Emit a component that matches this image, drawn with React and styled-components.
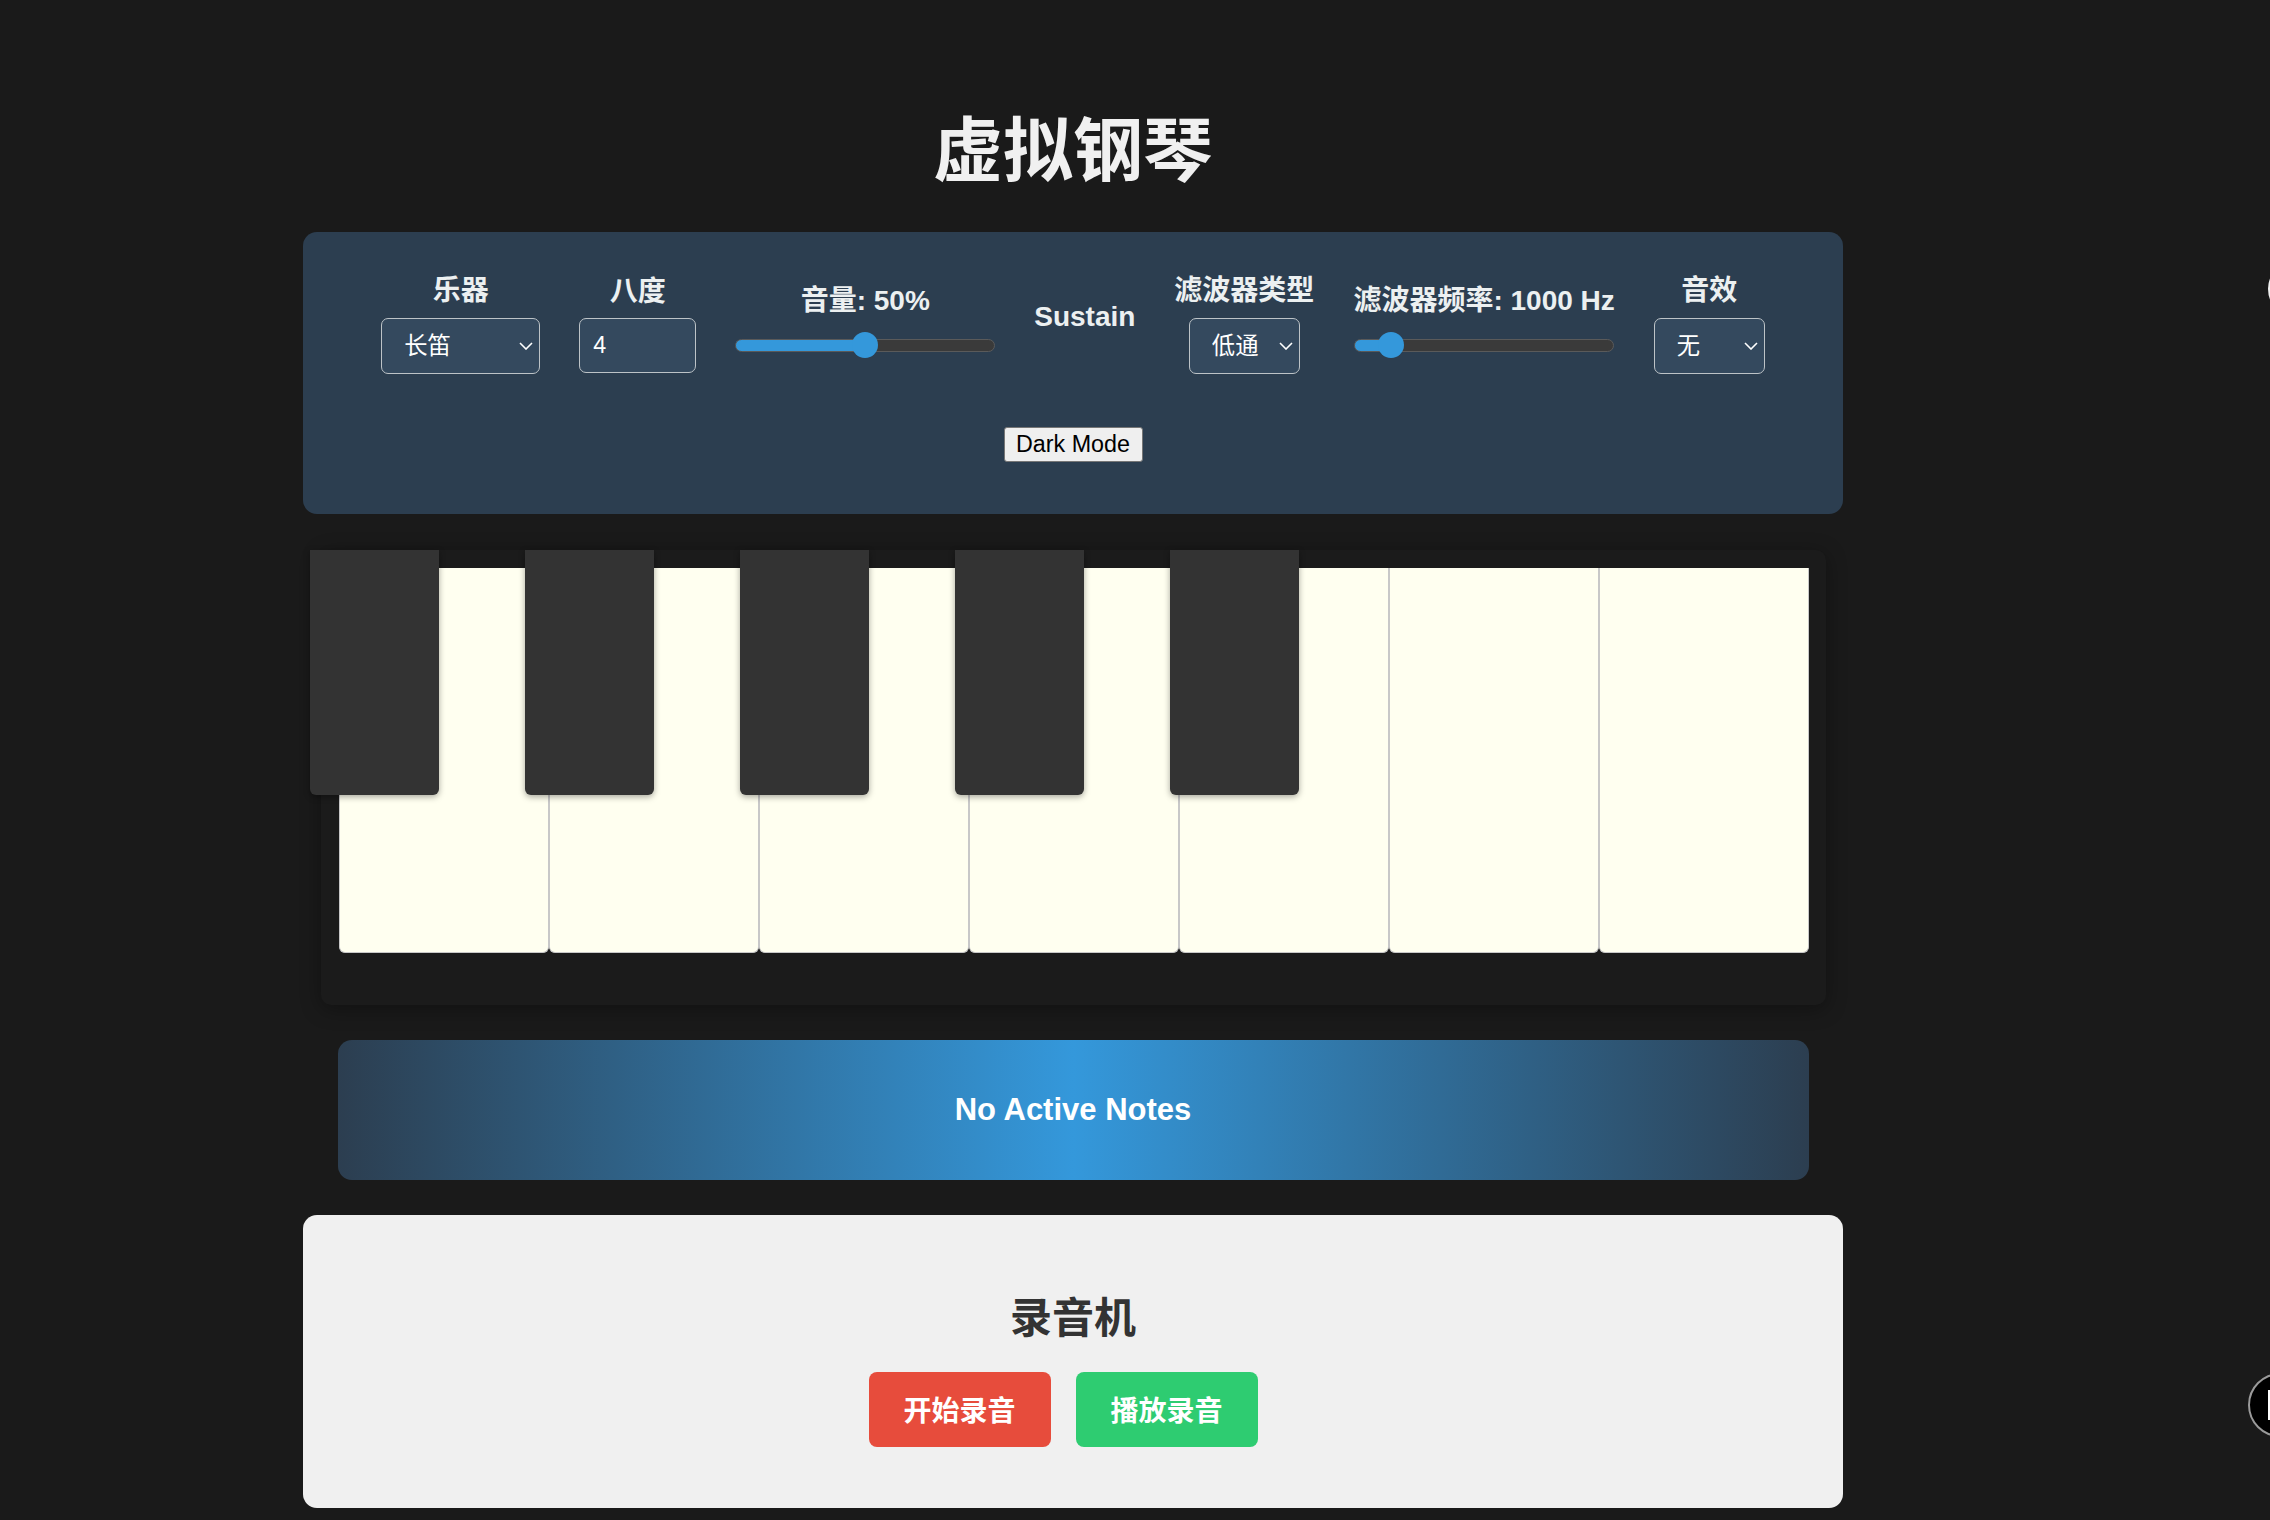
import React, { useState } from "react";
import styled, { createGlobalStyle } from "styled-components";

const GlobalStyle = createGlobalStyle`
  html, body {
    margin: 0;
    padding: 0;
    background: #1a1a1a;
    overflow: hidden;
  }
  body {
    font-family: "Liberation Sans", "Noto Sans CJK SC", sans-serif;
    color: #f0f0f0;
  }
`;

const Page = styled.div`
  padding: 110px 0 0 303px;
`;

const Column = styled.div`
  width: 1540px;
  display: flex;
  flex-direction: column;
  align-items: center;
`;

const Title = styled.h1`
  margin: 0 0 38px;
  font-size: 70px;
  line-height: 84px;
  font-weight: 700;
  color: #f0f0f0;
`;

const ControlPanel = styled.div`
  align-self: stretch;
  background: #2c3e50;
  border-radius: 14px;
  padding: 42px 0 52px;
  display: flex;
  flex-direction: column;
  align-items: center;
`;

const ControlRow = styled.div`
  display: flex;
  align-items: center;
  justify-content: center;
  gap: 39px;
`;

const ControlGroup = styled.div`
  display: flex;
  flex-direction: column;
  align-items: center;
  gap: ${({ $gap }) => ($gap === undefined ? 10 : $gap)}px;
  padding-bottom: ${({ $padBottom }) => $padBottom || 0}px;
`;

const Label = styled.label`
  font-size: 28px;
  line-height: 33.6px;
  font-weight: 700;
  color: #ecf0f1;
  white-space: nowrap;
`;

const SelectWrap = styled.div`
  position: relative;
  width: ${({ $width }) => $width}px;
  height: 56px;
`;

const Select = styled.select`
  appearance: none;
  -webkit-appearance: none;
  box-sizing: border-box;
  width: 100%;
  height: 100%;
  margin: 0;
  padding: 0 0 0 22px;
  background: #34495e;
  border: 1px solid #bdc3c7;
  border-radius: 7px;
  color: #ffffff;
  font-family: inherit;
  font-size: 23.3px;
  outline: none;
`;

const Chevron = styled.svg`
  position: absolute;
  right: 7px;
  top: 50%;
  transform: translateY(-50%);
  pointer-events: none;
`;

const NumberInput = styled.input`
  box-sizing: border-box;
  width: 117px;
  height: 55px;
  margin: 0;
  padding: 0 13px;
  background: #34495e;
  border: 1px solid #bdc3c7;
  border-radius: 7px;
  color: #ffffff;
  font-family: inherit;
  font-size: 23.3px;
  outline: none;
`;

const Slider = styled.input`
  -webkit-appearance: none;
  appearance: none;
  box-sizing: border-box;
  width: 260px;
  height: 13px;
  margin: 7px 0 12px;
  border: 1px solid #5a5a5a;
  border-radius: 7px;
  background: linear-gradient(
    to right,
    #3498db 0%,
    #3498db ${({ $fill }) => $fill}%,
    #3a3a3a ${({ $fill }) => $fill}%,
    #3a3a3a 100%
  );
  outline: none;

  &::-webkit-slider-thumb {
    -webkit-appearance: none;
    appearance: none;
    width: 26px;
    height: 26px;
    border-radius: 50%;
    background: #3498db;
    border: none;
    cursor: pointer;
  }
`;

const ModeButton = styled.button`
  margin-top: 53px;
  width: 139px;
  height: 35px;
  padding: 0;
  background: #efefef;
  border: 1px solid #767676;
  border-radius: 3px;
  color: #000;
  font-family: "Liberation Sans", sans-serif;
  font-size: 23.3px;
  cursor: pointer;
`;

const PianoBox = styled.div`
  position: relative;
  margin-top: 36px;
  padding: 18px 17px 52px 18px;
  background: #1b1b1b;
  border-radius: 10px;
  box-shadow: 0 4px 20px rgba(0, 0, 0, 0.35);
  display: flex;
`;

const WhiteKey = styled.div`
  box-sizing: border-box;
  width: 210px;
  height: 385px;
  background: #fffff0;
  border: 1px solid #c8c8c8;
  border-top: none;
  border-radius: 0 0 6px 6px;
  cursor: pointer;
`;

const BlackKey = styled.div`
  position: absolute;
  top: 0;
  left: ${({ $index }) => $index * 215 - 11}px;
  width: 129px;
  height: 245px;
  background: #333333;
  border-radius: 0 0 6px 6px;
  box-shadow: 0 2px 6px rgba(0, 0, 0, 0.35);
  cursor: pointer;
  z-index: 2;
`;

const NotesBar = styled.div`
  margin-top: 35px;
  width: 1471px;
  height: 140px;
  border-radius: 14px;
  background: linear-gradient(90deg, #2c3e50 0%, #3498db 50%, #2c3e50 100%);
  display: flex;
  align-items: center;
  justify-content: center;
  color: #ffffff;
  font-size: 31px;
  font-weight: 700;
`;

const Recorder = styled.div`
  align-self: stretch;
  margin-top: 35px;
  padding: 79px 0 61px;
  background: #f0f0f0;
  border-radius: 14px;
  display: flex;
  flex-direction: column;
  align-items: center;
`;

const RecorderTitle = styled.h2`
  margin: 0 0 28px;
  font-size: 42px;
  line-height: 50px;
  font-weight: 700;
  color: #333333;
`;

const RecorderButtons = styled.div`
  display: flex;
  gap: 25px;
  padding-right: 20px;
`;

const RecButton = styled.button`
  width: 182px;
  height: 75px;
  padding: 0;
  border: none;
  border-radius: 8px;
  background: ${({ $color }) => $color};
  color: #ffffff;
  font-family: inherit;
  font-size: 28px;
  font-weight: 700;
  cursor: pointer;
`;

const EdgeDot = styled.div`
  position: fixed;
  left: 2268px;
  top: 259px;
  width: 60px;
  height: 60px;
  border-radius: 50%;
  background: #f0f0f0;
`;

const EdgeFab = styled.div`
  position: fixed;
  left: 2248px;
  top: 1373px;
  box-sizing: border-box;
  width: 64px;
  height: 64px;
  border-radius: 50%;
  background: #000;
  border: 2px solid #9a9a9a;
  display: flex;
  align-items: center;
  padding-left: 18px;
`;

const FabMark = styled.span`
  display: block;
  width: 16px;
  height: 30px;
  background: #ffffff;
`;

const ChevronIcon = () => (
  <Chevron width="14" height="8" viewBox="0 0 14 8">
    <polyline points="1,1 7,7 13,1" fill="none" stroke="#ffffff" strokeWidth="1.6" />
  </Chevron>
);

const SelectBox = ({ width, value, options }) => (
  <SelectWrap $width={width}>
    <Select defaultValue={value}>
      {options.map((o) => (
        <option key={o}>{o}</option>
      ))}
    </Select>
    <ChevronIcon />
  </SelectWrap>
);

const App = () => {
  const [volume, setVolume] = useState(50);
  const [freq, setFreq] = useState(1000);
  const freqMin = 20;
  const freqMax = 10000;
  const freqFill = ((freq - freqMin) / (freqMax - freqMin)) * 100;

  return (
    <>
      <GlobalStyle />
      <Page>
        <Column>
          <Title>虚拟钢琴</Title>

          <ControlPanel>
            <ControlRow>
              <ControlGroup>
                <Label>乐器</Label>
                <SelectBox width={159} value="长笛" options={["钢琴", "长笛", "小提琴", "吉他"]} />
              </ControlGroup>
              <ControlGroup>
                <Label>八度</Label>
                <NumberInput type="number" defaultValue={4} min={1} max={7} />
              </ControlGroup>
              <ControlGroup $gap={14}>
                <Label>音量: {volume}%</Label>
                <Slider
                  type="range"
                  min={0}
                  max={100}
                  value={volume}
                  $fill={volume}
                  onChange={(e) => setVolume(Number(e.target.value))}
                />
              </ControlGroup>
              <ControlGroup $padBottom={15}>
                <Label>Sustain</Label>
              </ControlGroup>
              <ControlGroup>
                <Label>滤波器类型</Label>
                <SelectBox width={111} value="低通" options={["低通", "高通", "带通"]} />
              </ControlGroup>
              <ControlGroup $gap={14}>
                <Label>滤波器频率: {freq} Hz</Label>
                <Slider
                  type="range"
                  min={freqMin}
                  max={freqMax}
                  value={freq}
                  $fill={freqFill}
                  onChange={(e) => setFreq(Number(e.target.value))}
                />
              </ControlGroup>
              <ControlGroup>
                <Label>音效</Label>
                <SelectBox width={111} value="无" options={["无", "混响", "延迟"]} />
              </ControlGroup>
            </ControlRow>
            <ModeButton>Dark Mode</ModeButton>
          </ControlPanel>

          <PianoBox>
            {[0, 1, 2, 3, 4, 5, 6].map((i) => (
              <WhiteKey key={`w${i}`} />
            ))}
            {[0, 1, 2, 3, 4].map((i) => (
              <BlackKey key={`b${i}`} $index={i} />
            ))}
          </PianoBox>

          <NotesBar>No Active Notes</NotesBar>

          <Recorder>
            <RecorderTitle>录音机</RecorderTitle>
            <RecorderButtons>
              <RecButton $color="#e74c3c">开始录音</RecButton>
              <RecButton $color="#2ecc71">播放录音</RecButton>
            </RecorderButtons>
          </Recorder>
        </Column>
      </Page>
      <EdgeDot />
      <EdgeFab>
        <FabMark />
      </EdgeFab>
    </>
  );
};

export default App;
